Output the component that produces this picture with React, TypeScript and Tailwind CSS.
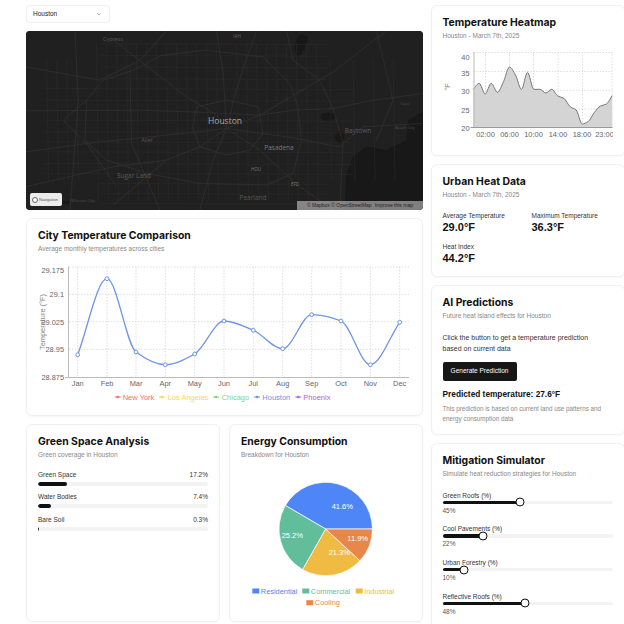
import React from "react";

type P = [number, number];

function monotone(pts: P[]): string {
  const n = pts.length;
  const d: number[] = [];
  const m: number[] = [];
  for (let i = 0; i < n - 1; i++) d.push((pts[i + 1][1] - pts[i][1]) / (pts[i + 1][0] - pts[i][0]));
  for (let i = 0; i < n; i++) {
    if (i === 0) m.push(d[0]);
    else if (i === n - 1) m.push(d[n - 2]);
    else m.push(d[i - 1] * d[i] <= 0 ? 0 : (2 * d[i - 1] * d[i]) / (d[i - 1] + d[i]));
  }
  let s = `M${pts[0][0]},${pts[0][1]}`;
  for (let i = 0; i < n - 1; i++) {
    const h = (pts[i + 1][0] - pts[i][0]) / 3;
    s += `C${pts[i][0] + h},${pts[i][1] + m[i] * h} ${pts[i + 1][0] - h},${pts[i + 1][1] - m[i + 1] * h} ${pts[i + 1][0]},${pts[i + 1][1]}`;
  }
  return s;
}

const card = "rounded-md border border-[#f0f0f0] bg-white shadow-[0_1px_2px_rgba(0,0,0,0.03)] px-[11px] pt-[8.5px] pb-[8px]";
const font = { fontFamily: '"Liberation Sans", Arial, sans-serif' };

function Head({ title, sub }: { title: string; sub: string }) {
  return (
    <div>
      <h2 className="font-['Inter',sans-serif] text-[10.4px] leading-[16px] font-bold text-[#111]">{title}</h2>
      <p className="text-[6.5px] leading-[10px] text-[#888]">{sub}</p>
    </div>
  );
}

const minorV = [140, 170, 200, 230, 290, 320, 350, 380, 410, 440, 470, 500, 530, 560, 590, 620, 650, 710, 740, 770, 800, 830, 860, 890, 920, 950, 990, 1060, 1120, 1180];
const minorH = [130, 165, 200, 235, 265, 300, 360, 395, 425, 455, 490, 520, 550, 580, 610];
const major: string[] = [
  "M78,332 L420,330 L600,336 L780,345 L880,330 L1000,325 L1120,300 L1270,280",
  "M335,115 L450,205 L560,290 L650,345 L680,385",
  "M770,92 L735,190 L700,300 L685,385",
  "M650,92 L670,220 L680,385",
  "M340,615 L500,480 L600,440 L680,385",
  "M680,385 L780,450 L900,560 L1000,630",
  "M680,385 L640,480 L600,630",
  "M680,385 L860,410 L1020,440 L1090,380 L1270,370",
  "M78,455 L300,425 L500,405 L680,385",
  "M680,385 L780,345 L1000,215 L1110,130 L1160,92",
  "M590,320 L680,300 L775,320 L790,400 L750,450 L680,465 L600,440 L578,380 Z",
  "M485,165 L620,150 L790,170 L870,250 L895,320 L905,420 L880,520 L800,555 L600,550 L440,520 L320,480 L255,420 L260,300 L310,240 L400,210 Z",
  "M260,300 L190,360 L260,430 L350,560",
  "M78,200 L300,240 L420,180 L500,92",
  "M860,92 L880,180 L960,240 L1000,325 L1030,430 L1020,630",
  "M225,92 L235,300 L210,630",
  "M390,200 L395,430 L480,630",
  "M1130,92 L1180,300 L1130,420",
  "M78,560 L340,500 L500,480",
];

function MapArt() {
  return (
    <svg viewBox="78 92 1192 538" preserveAspectRatio="none" className="block h-full w-full blur-[0.4px]" aria-hidden="true">
      <rect x="78" y="92" width="1192" height="538" fill="#202020" />
      <g fill="#181818">
        <path d="M1035,630 L1040,520 L1060,470 L1100,440 L1160,450 L1220,420 L1225,360 L1270,335 L1270,630 Z" />
        <path d="M885,150 Q880,120 905,100 L925,110 Q920,150 895,170 Z" />
        <ellipse cx="985" cy="350" rx="22" ry="12" />
        <ellipse cx="1020" cy="410" rx="14" ry="18" />
      </g>
      <g stroke="#2b2b2b" strokeWidth="1.6" fill="none">
        {minorV.map((x) => (
          <path key={x} d={`M${x},${x < 250 || x > 950 ? 180 : 130} L${x + 6},${x < 250 || x > 950 ? 540 : 600}`} />
        ))}
        {minorH.map((y) => (
          <path key={y} d={`M${y < 250 || y > 540 ? 300 : 130},${y} L${y < 250 || y > 540 ? 980 : 1060},${y + 3}`} />
        ))}
      </g>
      <g stroke="#323232" strokeWidth="2.1" fill="none">
        {major.map((d) => (
          <path key={d} d={d} />
        ))}
      </g>
    </svg>
  );
}

function MapLabel({ x, y, t, c, s }: { x: number; y: number; t: string; c: string; s: number }) {
  return (
    <span className="absolute -translate-x-1/2 -translate-y-1/2 whitespace-nowrap font-['Open_Sans',sans-serif]" style={{ left: x, top: y, color: c, fontSize: s }}>
      {t}
    </span>
  );
}

const cityPts: P[] = [
  [77.7, 354.7], [107, 278.7], [136, 352], [165.3, 364.7], [194.7, 354], [224, 321], [253.3, 330.3], [282.7, 348.7], [311.7, 314.7], [341, 321], [370.3, 364.7], [399.7, 322.3],
];
const months = ["Jan", "Feb", "Mar", "Apr", "May", "Jun", "Jul", "Aug", "Sep", "Oct", "Nov", "Dec"];
const legend: [string, string, number, number][] = [
  ["New York", "#ef6f6c", 117.7, 122.7],
  ["Los Angeles", "#fbd65c", 162, 167.7],
  ["Chicago", "#7fd67f", 216, 221.7],
  ["Houston", "#6f94e4", 257, 262.3],
  ["Phoenix", "#b860d8", 298.3, 303.3],
];

function CityChart() {
  return (
    <svg viewBox="38 260 373 145" width={373} height={145} className="block" style={font}>
      {[294.3, 321.7, 349.3, 267].map((y) => (
        <line key={y} x1="69" x2="409" y1={y} y2={y} stroke="#dedede" strokeWidth="1" strokeDasharray="1.5 1.5" />
      ))}
      {cityPts.map(([x]) => (
        <line key={x} x1={x} x2={x} y1="267" y2="377" stroke="#dedede" strokeWidth="1" strokeDasharray="1.5 1.5" />
      ))}
      <line x1="68.5" x2="68.5" y1="266.5" y2="377.5" stroke="#bbb" />
      <line x1="65" x2="409" y1="377.5" y2="377.5" stroke="#bbb" />
      <g fontSize="7.4" fill="#666" textAnchor="end">
        <text x="64" y="272.5">29.175</text>
        <text x="64" y="297">29.1</text>
        <text x="64" y="324.5">29.025</text>
        <text x="64" y="352">28.95</text>
        <text x="64" y="379.5">28.875</text>
      </g>
      <text transform="translate(45,322) rotate(-90)" textAnchor="middle" fontSize="7.4" fill="#888">Temperature (°F)</text>
      <path d={monotone(cityPts)} fill="none" stroke="#6f94e4" strokeWidth="1.3" />
      {cityPts.map(([x, y]) => (
        <circle key={x} cx={x} cy={y} r="1.9" fill="#fff" stroke="#6f94e4" strokeWidth="1" />
      ))}
      <g fontSize="7.4" fill="#666" textAnchor="middle">
        {months.map((m, i) => (
          <text key={m} x={cityPts[i][0]} y="386">{m}</text>
        ))}
      </g>
      <g fontSize="7.5">
        {legend.map(([t, c, x, tx]) => (
          <g key={t}>
            <line x1={x - 3} x2={x + 3} y1="397" y2="397" stroke={c} strokeWidth="1" />
            <circle cx={x} cy="397" r="1.3" fill={c} />
            <text x={tx} y="399.5" fill={c}>{t}</text>
          </g>
        ))}
      </g>
    </svg>
  );
}

const heatZ: P[] = [
  [143, 268], [161, 250], [179, 282], [197, 250], [216, 277], [234, 245], [252, 201], [270, 225], [288, 268], [306, 217], [325, 268], [343, 268], [361, 279], [379, 268], [397, 288], [415, 295], [434, 320], [452, 330], [470, 372], [488, 365], [506, 338], [525, 318], [543, 312], [560, 287],
];
const heatPts: P[] = heatZ.map(([x, y]) => [425 + x / 3, y / 3]);

function HeatChart() {
  const line = monotone(heatPts);
  const last = heatPts[heatPts.length - 1];
  return (
    <svg viewBox="442.5 48 170 92" width={170} height={92} className="block" style={font}>
      {[52.5, 71.5, 90.3, 109].map((y) => (
        <line key={y} x1="473" x2="612" y1={y} y2={y} stroke="#dedede" strokeDasharray="1.5 1.5" />
      ))}
      {[485, 509, 533, 557.5, 582, 611.5].map((x) => (
        <line key={x} x1={x} x2={x} y1="52" y2="128" stroke="#dedede" strokeDasharray="1.5 1.5" />
      ))}
      <path d={`${line}L${last[0]},127.7L${heatPts[0][0]},127.7Z`} fill="#d4d4d4" />
      <path d={line} fill="none" stroke="#777" strokeWidth="1" />
      <line x1="473.5" x2="473.5" y1="52" y2="128" stroke="#bbb" />
      <line x1="470" x2="612" y1="127.5" y2="127.5" stroke="#999" />
      <g fontSize="7.4" fill="#666" textAnchor="end">
        <text x="469" y="59.5">40</text>
        <text x="469" y="75.5">35</text>
        <text x="469" y="94">30</text>
        <text x="469" y="112.5">25</text>
        <text x="469" y="131">20</text>
      </g>
      <text transform="translate(449,87) rotate(-90)" textAnchor="middle" fontSize="7.4" fill="#888">°F</text>
      <g fontSize="7.4" fill="#666" textAnchor="middle">
        <text x="485" y="136.5">02:00</text>
        <text x="509" y="136.5">06:00</text>
        <text x="533" y="136.5">10:00</text>
        <text x="557.5" y="136.5">14:00</text>
        <text x="581.5" y="136.5">18:00</text>
        <text x="604" y="136.5">23:00</text>
      </g>
    </svg>
  );
}

const pieData: [number, string][] = [
  [41.6, "#4f86f7"],
  [25.2, "#62bd9b"],
  [21.3, "#f0bb43"],
  [11.9, "#e9874a"],
];

function PieChart() {
  const cx = 325.7, cy = 529, r = 46.7;
  let a = 0;
  const slices = pieData.map(([v, c]) => {
    const a0 = a;
    a += (v / 100) * 2 * Math.PI;
    const x0 = cx + r * Math.cos(a0), y0 = cy - r * Math.sin(a0);
    const x1 = cx + r * Math.cos(a), y1 = cy - r * Math.sin(a);
    return { d: `M${cx},${cy}L${x0},${y0}A${r},${r} 0 ${v > 50 ? 1 : 0} 0 ${x1},${y1}Z`, c };
  });
  const leg: [string, string, number, number][] = [
    ["Residential", "#4f86f7", 252.3, 591],
    ["Commercial", "#62bd9b", 302.3, 591],
    ["Industrial", "#f0bb43", 355.7, 591],
    ["Cooling", "#e9874a", 306.3, 602.7],
  ];
  return (
    <svg viewBox="241 470 170 142" width={170} height={142} className="block" style={font}>
      {slices.map((s) => (
        <path key={s.c} d={s.d} fill={s.c} stroke="#fff" strokeWidth="0.7" />
      ))}
      <g fontSize="7.5" fill="#fff" textAnchor="middle">
        <text x="342.3" y="509">41.6%</text>
        <text x="292.3" y="537.7">25.2%</text>
        <text x="339.3" y="555.4">21.3%</text>
        <text x="357.7" y="540.7">11.9%</text>
      </g>
      <g fontSize="7.4">
        {leg.map(([t, c, x, y]) => (
          <g key={t}>
            <rect x={x} y={y - 2.5} width="7" height="5" fill={c} />
            <text x={x + 8.5} y={y + 2.5} fill={c}>{t}</text>
          </g>
        ))}
      </g>
    </svg>
  );
}

const bars: [string, number][] = [
  ["Green Space", 17.2],
  ["Water Bodies", 7.4],
  ["Bare Soil", 0.3],
];
const sliders: [string, number, number][] = [
  ["Green Roofs (%)", 45, 77.5],
  ["Cool Pavements (%)", 22, 40],
  ["Urban Forestry (%)", 10, 21],
  ["Reflective Roofs (%)", 48, 82.5],
];

export default function App() {
  return (
    <div className="h-[624px] w-[624px] overflow-hidden bg-white" style={font}>
      <div className="flex w-[640px] gap-[7.5px] pt-[5px] pl-[26px]">
        <div className="flex w-[397px] flex-col">
          <div className="flex h-[18px] w-[84px] items-center justify-between rounded-[3px] border border-[#f0f0f0] bg-white pr-[7px] pl-[6px] text-[6.5px] text-[#222]">
            <span>Houston</span>
            <svg width="6" height="6" viewBox="0 0 24 24" fill="none" stroke="#777" strokeWidth="2">
              <path d="M5 9l7 7 7-7" />
            </svg>
          </div>
          <div className="relative mt-[8px] h-[179px] overflow-hidden rounded-[4px] bg-[#202020]">
            <MapArt />
            <MapLabel x={199} y={90} t="Houston" c="#a8a8a8" s={8.5} />
            <MapLabel x={108} y={145} t="Sugar Land" c="#5c5c5c" s={6.5} />
            <MapLabel x={253} y={117} t="Pasadena" c="#7a7a7a" s={6.5} />
            <MapLabel x={332} y={100} t="Baytown" c="#5c5c5c" s={6.5} />
            <MapLabel x={227} y={167} t="Pearland" c="#555" s={6.5} />
            <MapLabel x={121} y={109} t="Alief" c="#555" s={5.5} />
            <MapLabel x={87} y={8} t="Cypress" c="#555" s={5.5} />
            <MapLabel x={211} y={5} t="IAH" c="#666" s={4.5} />
            <MapLabel x={230} y={138} t="HOU" c="#777" s={4.5} />
            <MapLabel x={269} y={153} t="EFD" c="#777" s={4.5} />
            <MapLabel x={379} y={97} t="Beach City" c="#505050" s={4} />
            <MapLabel x={379} y={73} t="Cove" c="#505050" s={4} />
            <MapLabel x={57} y={170} t="Missouri City" c="#4d4d4d" s={4} />
            <div className="absolute top-[162px] left-[4px] flex h-[13px] w-[32px] items-center gap-[1px] rounded-[2px] bg-[#ececec] pl-[2px] text-[4px] text-[#555]">
              <span className="h-[6px] w-[6px] shrink-0 rounded-full border border-[#666] bg-white" />
              <span>Navigation</span>
            </div>
            <span className="absolute top-[167px] left-[36px] text-[6px] leading-[8px] font-bold text-[#111]">ox</span>
            <div className="absolute right-0 bottom-0 flex h-[9px] w-[126px] items-center justify-center gap-[3px] bg-white/45 text-[5px] whitespace-nowrap text-[#222]">
              <span>© Mapbox © OpenStreetMap</span>
              <span className="font-medium">Improve this map</span>
            </div>
          </div>
          <div className={`${card} mt-[8px] h-[198px]`}>
            <Head title="City Temperature Comparison" sub="Average monthly temperatures across cities" />
            <div className="mt-[6.5px]">
              <CityChart />
            </div>
          </div>
          <div className="mt-[8px] grid grid-cols-[194px_194px] gap-[9px]">
            <div className={`${card} h-[198px]`}>
              <Head title="Green Space Analysis" sub="Green coverage in Houston" />
              <div className="mt-[10.5px] flex flex-col gap-[6.8px]">
                {bars.map(([t, v]) => (
                  <div key={t}>
                    <div className="flex justify-between text-[6.5px] leading-[10px] text-[#333]">
                      <span>{t}</span>
                      <span>{v}%</span>
                    </div>
                    <div className="mt-[1.7px] h-[4px] overflow-hidden rounded-full bg-[#f3f3f3]">
                      <div className="h-full rounded-full bg-[#111]" style={{ width: `${v}%` }} />
                    </div>
                  </div>
                ))}
              </div>
            </div>
            <div className={`${card} h-[198px]`}>
              <Head title="Energy Consumption" sub="Breakdown for Houston" />
              <div className="mt-[10.5px]">
                <PieChart />
              </div>
            </div>
          </div>
        </div>
        <div className="flex w-[194px] flex-col gap-2">
          <div className={`${card} h-[151px]`}>
            <Head title="Temperature Heatmap" sub="Houston - March 7th, 2025" />
            <div className="mt-[7.5px]">
              <HeatChart />
            </div>
          </div>
          <div className={`${card} h-[113px]`}>
            <Head title="Urban Heat Data" sub="Houston - March 7th, 2025" />
            <div className="mt-[11px] grid grid-cols-2 gap-x-2 gap-y-[7.5px]">
              {[
                ["Average Temperature", "29.0°F"],
                ["Maximum Temperature", "36.3°F"],
                ["Heat Index", "44.2°F"],
              ].map(([l, v]) => (
                <div key={l}>
                  <div className="text-[6.5px] leading-[9px] text-[#333]">{l}</div>
                  <div className="mt-[0.5px] text-[11px] leading-[14px] font-bold text-[#111]">{v}</div>
                </div>
              ))}
            </div>
          </div>
          <div className={`${card} h-[150px]`}>
            <Head title="AI Predictions" sub="Future heat island effects for Houston" />
            <p className="mt-[11px] max-w-[160px] text-[7px] leading-[11px] text-[#333]">Click the button to get a temperature prediction based on current data</p>
            <button className="mt-[8px] block h-[19px] w-[74px] rounded-[2px] bg-[#171717] text-[6.5px] text-white">Generate Prediction</button>
            <p className="mt-[8.5px] text-[8.3px] leading-[11px] font-bold text-[#111]">Predicted temperature: 27.6°F</p>
            <p className="mt-[4.3px] text-[6.3px] leading-[9.5px] text-[#888]">This prediction is based on current land use patterns and energy consumption data</p>
          </div>
          <div className={`${card} h-[190px]`}>
            <Head title="Mitigation Simulator" sub="Simulate heat reduction strategies for Houston" />
            <div className="mt-[12px] flex flex-col gap-[9.7px]">
              {sliders.map(([t, v, pos]) => (
                <div key={t} className="text-[6.5px] leading-[9px] text-[#333]">
                  <div>{t}</div>
                  <div className="relative mt-[1px] h-[3.5px] rounded-full bg-[#f3f3f3]">
                    <div className="h-full rounded-full bg-[#111]" style={{ width: `${pos}px` }} />
                    <div className="absolute top-1/2 h-[9px] w-[9px] -translate-x-1/2 -translate-y-1/2 rounded-full border border-[#111] bg-white" style={{ left: `${pos}px` }} />
                  </div>
                  <div className="mt-[1.5px] text-[#555]">{v}%</div>
                </div>
              ))}
            </div>
          </div>
        </div>
      </div>
    </div>
  );
}
